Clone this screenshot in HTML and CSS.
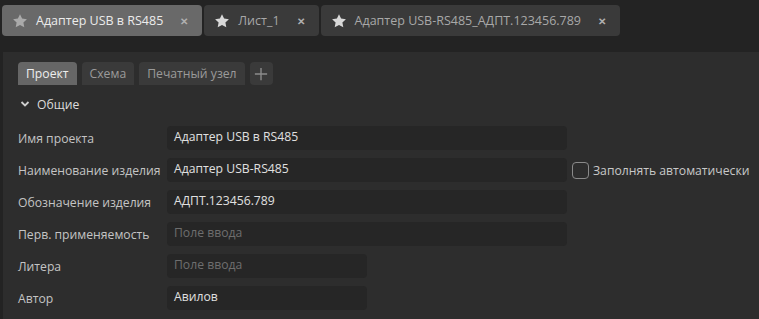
FILE: index.html
```html
<!DOCTYPE html>
<html lang="ru">
<head>
  <meta charset="UTF-8" />
  <title>Проект</title>
  <link rel="stylesheet" href="styles.css">
</head>
<body>

<div class="doc-tabs">
  <div class="doc-tab active">
    <svg class="star" viewBox="0 0 16 16"><path d="M8 1.2l2.1 4.4 4.8.6-3.5 3.3.9 4.8L8 12 3.7 14.3l.9-4.8L1.1 6.2l4.8-.6z"/></svg>
    <span class="doc-title">Адаптер USB в RS485</span>
    <span class="close">✕</span>
  </div>
  <div class="doc-tab">
    <svg class="star" viewBox="0 0 16 16"><path d="M8 1.2l2.1 4.4 4.8.6-3.5 3.3.9 4.8L8 12 3.7 14.3l.9-4.8L1.1 6.2l4.8-.6z"/></svg>
    <span class="doc-title">Лист_1</span>
    <span class="close">✕</span>
  </div>
  <div class="doc-tab">
    <svg class="star" viewBox="0 0 16 16"><path d="M8 1.2l2.1 4.4 4.8.6-3.5 3.3.9 4.8L8 12 3.7 14.3l.9-4.8L1.1 6.2l4.8-.6z"/></svg>
    <span class="doc-title">Адаптер USB-RS485_АДПТ.123456.789</span>
    <span class="close">✕</span>
  </div>
</div>

<div class="panel">
  <div class="sub-tabs">
    <span class="sub-tab active">Проект</span>
    <span class="sub-tab">Схема</span>
    <span class="sub-tab">Печатный узел</span>
    <span class="sub-tab add">
      <svg viewBox="0 0 16 16"><path d="M8 1v14M1 8h14"/></svg>
    </span>
  </div>

  <div class="section-head">
    <svg class="chevron" viewBox="0 0 10 10"><path d="M1.5 3l3.5 3.5L8.5 3"/></svg>
    Общие
  </div>

  <div class="form">
    <label>Имя проекта</label>
    <div class="field wide">Адаптер USB в RS485</div>

    <label>Наименование изделия</label>
    <div class="row">
      <div class="field wide">Адаптер USB-RS485</div>
      <span class="checkbox"></span>
      <span class="check-label">Заполнять автоматически</span>
    </div>

    <label>Обозначение изделия</label>
    <div class="field wide">АДПТ.123456.789</div>

    <label>Перв. применяемость</label>
    <div class="field wide empty">Поле ввода</div>

    <label>Литера</label>
    <div class="field short empty">Поле ввода</div>

    <label>Автор</label>
    <div class="field short">Авилов</div>
  </div>
</div>

</body>
</html>
```

FILE: styles.css
```css
* { box-sizing: border-box; margin: 0; padding: 0; }
body {
  background: #232323;
  font-family: "Open Sans", "Noto Sans", sans-serif;
  font-size: 12.2px;
  color: #d6d6d6;
  height: 319px;
  overflow: hidden;
}

.doc-tabs { display: flex; gap: 2px; padding: 5px 2px 0; height: 52px; }
.doc-tab {
  display: flex; align-items: center;
  height: 31px; padding: 0 14px 0 10px;
  background: #3a3a3a; border-radius: 4px;
  color: #a8a8a8;
}
.doc-tab.active { background: #696969; color: #ececec; }
.star { width: 16px; height: 16px; fill: #d8d8d8; margin-right: 8px; }
.doc-tab.active .star { fill: #aaaaaa; }
.doc-title { margin-right: 17px; font-size: 12.5px; }
.close { font-size: 10px; color: #b0b0b0; font-weight: bold; }

.panel {
  margin-left: 3px;
  background: #2d2d2d;
  height: 267px;
  padding: 10px 15px;
}

.sub-tabs { display: flex; gap: 5px; }
.sub-tab {
  height: 23px; line-height: 23px; padding: 0 8px;
  background: #3a3a3a; color: #9a9a9a;
  border-radius: 4px 4px 0 0;
}
.sub-tab.active { background: #666666; color: #eeeeee; }
.sub-tab.add {
  width: 23px; padding: 0; border-radius: 4px;
  display: flex; align-items: center; justify-content: center;
}
.sub-tab.add svg { width: 14px; height: 14px; stroke: #8c8c8c; stroke-width: 1.6; fill: none; }

.section-head {
  display: flex; align-items: center; gap: 7px;
  height: 22px; margin: 8px 0 11px 2px;
  color: #dcdcdc;
}
.chevron { width: 10px; height: 10px; stroke: #cfcfcf; stroke-width: 1.8; fill: none; }

.form {
  display: grid;
  grid-template-columns: 149px 1fr;
  row-gap: 8px;
  align-items: center;
}
.form label { color: #c4c4c4; white-space: nowrap; }
.row { display: flex; align-items: center; }
.field {
  height: 24px; line-height: 22px;
  padding: 0 7px;
  background: #262626; border-radius: 4px;
  color: #e0e0e0;
}
.field.wide { width: 400px; }
.field.short { width: 200px; }
.field.empty { color: #6e6e6e; }
.checkbox {
  width: 17px; height: 17px; margin: 0 4px 0 5px;
  border: 1px solid #8a8a8a; border-radius: 4px;
}
.check-label { color: #c8c8c8; white-space: nowrap; }
```
